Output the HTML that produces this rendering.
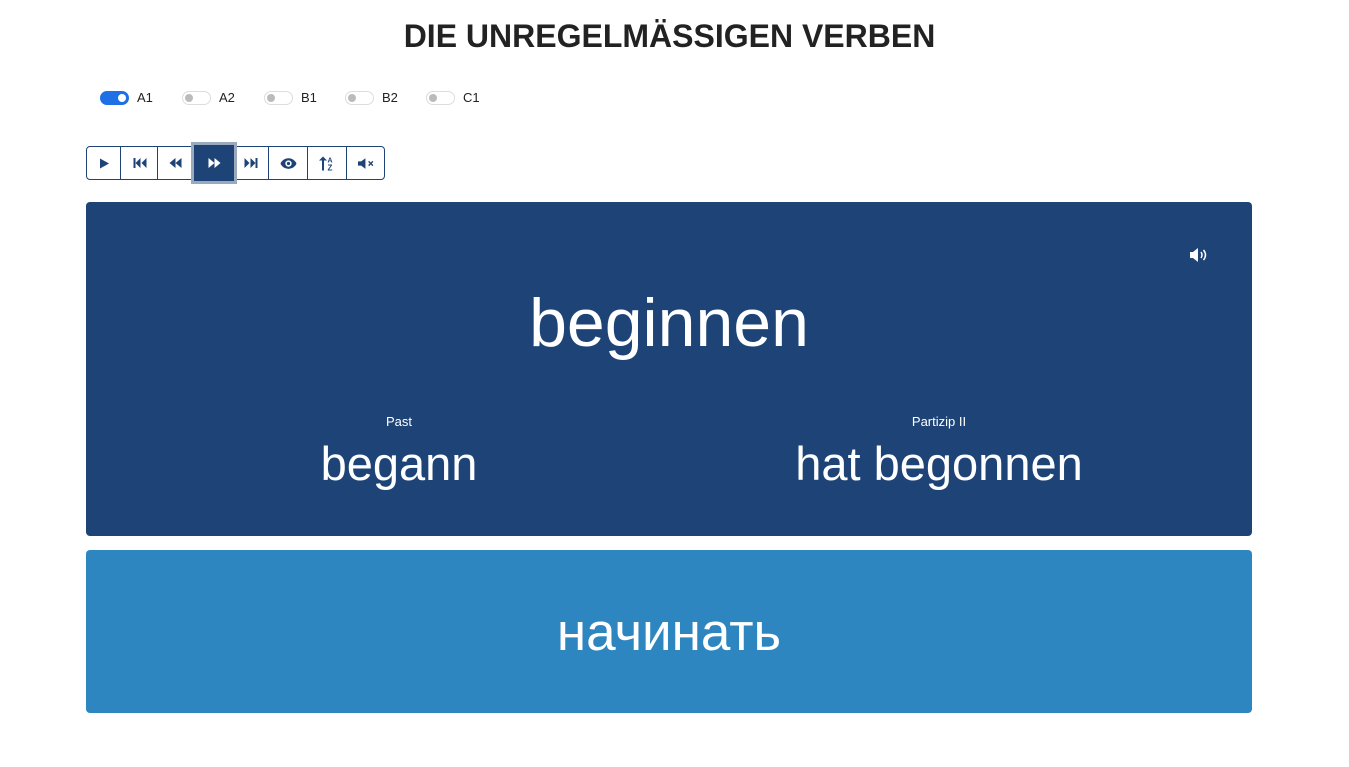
<!DOCTYPE html>
<html><head><meta charset="utf-8"><style>
*{box-sizing:border-box;margin:0;padding:0}
body{width:1349px;height:767px;background:#fff;font-family:"Liberation Sans",sans-serif;position:relative;overflow:hidden}
h1{position:absolute;top:18px;left:0;width:1339px;text-align:center;font-size:32px;font-weight:bold;color:#222;letter-spacing:0px}
.tg{position:absolute;top:90px;font-size:13px;color:#222;display:flex;align-items:center}
.sw{width:29px;height:14px;border-radius:7px;border:1px solid #ddd;position:relative;margin-right:8px}
.sw i{position:absolute;left:2px;top:2px;width:8px;height:8px;border-radius:50%;background:#bbb}
.sw.on{background:#1f6fe5;border-color:#1f6fe5}
.sw.on i{left:auto;right:2px;background:#fff}
.bar{position:absolute;top:146px;left:86px;width:299px;height:34px;border:1px solid #1e4477;border-radius:4px}
.b{position:absolute;top:0;height:32px;border-right:1px solid #1e4477;display:flex;align-items:center;justify-content:center}
.b svg{fill:#1e4477}
.act{background:#1e4477;outline:3px solid #9aa9bd;top:-2px;height:36px}
.act svg{fill:#fff}
.card{position:absolute;left:86px;width:1166px;border-radius:4px;color:#fff;text-align:center}
.c1{top:202px;height:334px;background:#1e4477}
.c2{top:550px;height:163px;background:#2e86c1}
.t{position:absolute;white-space:nowrap}
</style></head><body>
<h1>DIE UNREGELMÄSSIGEN VERBEN</h1>
<div class="tg" style="left:100px"><div class="sw on"><i></i></div>A1</div>
<div class="tg" style="left:182px"><div class="sw"><i></i></div>A2</div>
<div class="tg" style="left:264px"><div class="sw"><i></i></div>B1</div>
<div class="tg" style="left:345px"><div class="sw"><i></i></div>B2</div>
<div class="tg" style="left:426px"><div class="sw"><i></i></div>C1</div>
<div class="bar">
<div class="b" style="left:0;width:34px"><svg width="12" height="13" viewBox="0 0 12 12"><path d="M2 1L11 6L2 11Z"/></svg></div>
<div class="b" style="left:34px;width:37px"><svg width="15" height="12" viewBox="0 0 14 12"><path d="M1 1h2v10H1zM8 1v10L3 6zM14 1v10L9 6z"/></svg></div>
<div class="b" style="left:71px;width:36px"><svg width="15" height="12" viewBox="0 0 14 12"><path d="M7 1v10L1 6zM13 1v10L7 6z"/></svg></div>
<div class="b act" style="left:107px;width:40px;border:none"><svg width="15" height="12" viewBox="0 0 14 12"><path d="M1 1v10l6-5zM7 1v10l6-5z"/></svg></div>
<div class="b" style="left:147px;width:35px"><svg width="15" height="12" viewBox="0 0 14 12"><path d="M0 1v10l5-5zM6 1v10l5-5zM11 1h2v10h-2z"/></svg></div>
<div class="b" style="left:182px;width:39px"><svg width="17" height="13" viewBox="0 0 16 12"><path d="M8 1C4 1 1 4 0.5 6 1 8 4 11 8 11s7-3 7.5-5C15 4 12 1 8 1zm0 8a3 3 0 110-6 3 3 0 010 6z"/><circle cx="8" cy="6" r="1.5"/></svg></div>
<div class="b" style="left:221px;width:39px"><svg width="16" height="15" viewBox="0 0 16 14"><path d="M4 0L0 4h3v10h2V4h3z"/><text x="8.5" y="6" font-size="7" font-weight="bold" font-family="Liberation Sans" fill="#1e4477">A</text><text x="8.5" y="14" font-size="8" font-weight="bold" font-family="Liberation Sans" fill="#1e4477">Z</text></svg></div>
<div class="b" style="left:260px;width:38px;border:none"><svg width="17" height="13" viewBox="0 0 16 12"><path d="M0 4h3l4-3v10L3 8H0z"/><path d="M10 4l4 4M14 4l-4 4" stroke="#1e4477" stroke-width="1.3"/></svg></div>
</div>
<div class="card c1">
<svg style="position:absolute;left:1104px;top:45px" width="20" height="16" viewBox="0 0 20 14" fill="#fff"><path d="M0 4h3l5-4v14L3 10H0z"/><path d="M11 4q2 3 0 6M13.5 2q4 5 0 10" stroke="#fff" stroke-width="1.5" fill="none"/></svg>
<div class="t" style="left:0;width:1166px;top:82px;font-size:68px">beginnen</div>
<div class="t" style="left:213px;width:200px;top:212px;font-size:13px">Past</div>
<div class="t" style="left:213px;width:200px;top:234px;font-size:47px">begann</div>
<div class="t" style="left:653px;width:400px;top:212px;font-size:13px">Partizip II</div>
<div class="t" style="left:653px;width:400px;top:234px;font-size:47px">hat begonnen</div>
</div>
<div class="card c2"><div class="t" style="left:0;width:1166px;top:52px;font-size:53px">начинать</div></div>
</body></html>
